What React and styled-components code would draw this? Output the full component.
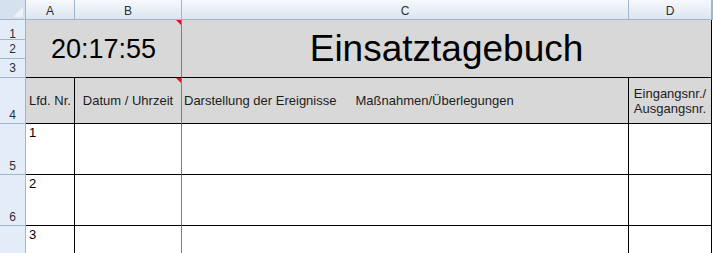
import * as React from "react";
import styled, { createGlobalStyle, css } from "styled-components";

const GlobalStyle = createGlobalStyle`
  html,
  body {
    margin: 0;
    padding: 0;
    background: #fff;
    overflow: hidden;
  }
  body {
    font-family: "Liberation Sans", Arial, sans-serif;
    color: #000;
  }
`;

const HEAD_LINE = "#9eb6ce";

const Sheet = styled.div`
  display: grid;
  grid-template-columns: 26px 49px 107px 447px 83px 1fr;
  grid-template-rows: 20px 20px 19px 19px 46px 51px 51px 51px;
  width: 713px;
  height: 253px;
  overflow: hidden;
`;

const Corner = styled.div`
  position: relative;
  box-sizing: border-box;
  background: #d5e1ef;
  border-right: 1px solid ${HEAD_LINE};
  border-bottom: 1px solid ${HEAD_LINE};

  &::after {
    content: "";
    position: absolute;
    right: 2px;
    bottom: 2px;
    border-bottom: 10px solid #eef3f9;
    border-left: 10px solid transparent;
  }
`;

const ColHead = styled.div`
  box-sizing: border-box;
  display: flex;
  align-items: center;
  justify-content: center;
  background: linear-gradient(#f6f9fc, #dce5f0);
  border-right: 1px solid ${HEAD_LINE};
  border-bottom: 1px solid ${HEAD_LINE};
  font-size: 12px;
  color: #2a2f36;
  padding-top: 2px;
`;

// row numbers: short rows are centred, tall rows sit on the bottom line
const RowHead = styled.div`
  box-sizing: border-box;
  display: flex;
  align-items: ${(p) => (p.$center ? "center" : "flex-end")};
  justify-content: center;
  background: #e4ecf7;
  border-right: 1px solid ${HEAD_LINE};
  border-bottom: 1px solid ${HEAD_LINE};
  font-size: 12px;
  line-height: ${(p) => (p.$tight ? 10 : 15)}px;
  color: #2a2f36;
  padding-top: ${(p) => (p.$center ? 1 : 0)}px;
`;

const lineColor = { black: "#000", gray: "#808080", none: "transparent" };

const Cell = styled.div`
  position: relative;
  box-sizing: border-box;
  display: flex;
  min-width: 0;
  background: ${(p) => (p.$shade ? "#d8d8d8" : "#fff")};
  border-right: 1px solid ${(p) => lineColor[p.$right || "black"]};
  border-bottom: 1px solid ${(p) => lineColor[p.$bottom || "black"]};
  grid-column: span ${(p) => p.$cols || 1};
  grid-row: span ${(p) => p.$rows || 1};
  font-size: 13px;
  line-height: 15px;
  color: ${(p) => (p.$shade ? "#1c1c1c" : "#000")};
  ${(p) =>
    p.$align === "center"
      ? css`
          align-items: center;
          justify-content: center;
          text-align: center;
        `
      : p.$align === "middle"
      ? css`
          align-items: center;
          padding-left: 2px;
        `
      : css`
          align-items: flex-start;
          padding: 1px 3px;
        `}
`;

const Clock = styled.span`
  font-size: 27px;
  line-height: 30px;
  color: #000;
`;

const Title = styled.span`
  font-size: 37px;
  line-height: 42px;
  padding-top: 1px;
  color: #000;
`;

const Captions = styled.div`
  display: flex;
  gap: 19px;
`;

const Comment = styled.span`
  position: absolute;
  top: 0;
  right: 0;
  border-top: 5px solid #e0141e;
  border-left: 5px solid transparent;
`;

const Spare = styled.div`
  background: #fff;
`;

const ROWS = [
  { id: 5, nr: "1" },
  { id: 6, nr: "2" },
  { id: 7, nr: "3" },
];

export default function App() {
  return (
    <>
      <GlobalStyle />
      <Sheet>
        <Corner />
        <ColHead>A</ColHead>
        <ColHead>B</ColHead>
        <ColHead>C</ColHead>
        <ColHead>D</ColHead>
        <ColHead />

        <RowHead $tight>1</RowHead>
        <Cell $shade $cols={2} $rows={3} $align="center" $right="gray">
          <Clock>20:17:55</Clock>
          <Comment />
        </Cell>
        <Cell $shade $cols={2} $rows={3} $align="center">
          <Title>Einsatztagebuch</Title>
        </Cell>
        <Spare />
        <RowHead $center>2</RowHead>
        <Spare />
        <RowHead $center>3</RowHead>
        <Spare />

        <RowHead>4</RowHead>
        <Cell $shade $align="center">Lfd. Nr.</Cell>
        <Cell $shade $align="center" $right="gray">
          Datum / Uhrzeit
          <Comment />
        </Cell>
        <Cell $shade $align="middle">
          <Captions>
            <span>Darstellung der Ereignisse</span>
            <span>Maßnahmen/Überlegungen</span>
          </Captions>
        </Cell>
        <Cell $shade $align="center">
          Eingangsnr./
          <br />
          Ausgangsnr.
        </Cell>
        <Spare />

        {ROWS.map((row) => (
          <React.Fragment key={row.id}>
            <RowHead>{row.id === 7 ? "" : row.id}</RowHead>
            <Cell>{row.nr}</Cell>
            <Cell $right="gray" />
            <Cell />
            <Cell />
            <Spare />
          </React.Fragment>
        ))}
      </Sheet>
    </>
  );
}
